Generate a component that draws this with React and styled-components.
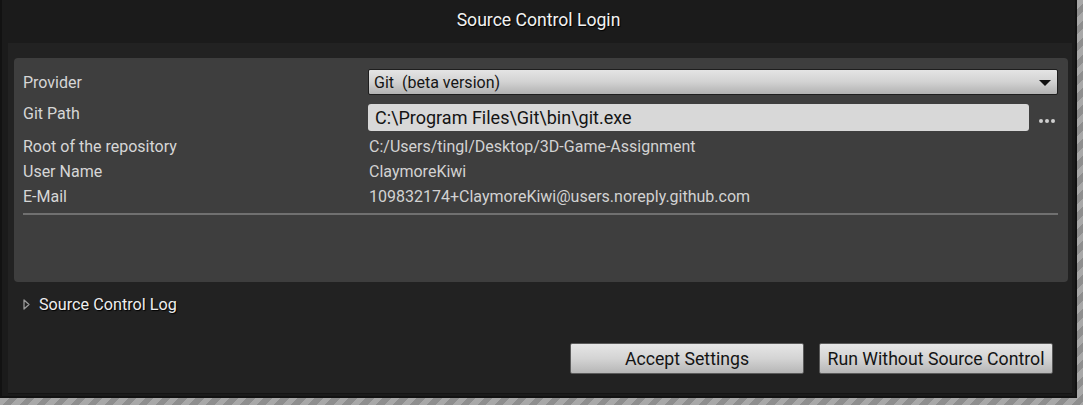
import React from "react";
import styled, { createGlobalStyle } from "styled-components";

const GlobalStyle = createGlobalStyle`
  html, body {
    margin: 0;
    padding: 0;
  }
  body {
    width: 1083px;
    height: 405px;
    overflow: hidden;
    font-family: Roboto, "Liberation Sans", sans-serif;
    background-color: #9a9a9a;
    background-image:
      repeating-linear-gradient(135deg, #8e8e8e 0 6px, #a8a8a8 6px 12px);
  }
`;

const Window = styled.div`
  box-sizing: border-box;
  width: 1077px;
  height: 398px;
  background: #1b1b1b;
  border: 2px solid #121212;
  border-top: none;
  display: flex;
  flex-direction: column;
`;

const TitleBar = styled.div`
  height: 43px;
  display: flex;
  align-items: center;
  justify-content: center;
  padding-bottom: 4px;
  box-sizing: border-box;
  color: #f2f2f2;
  font-size: 17.6px;
  text-shadow: 1px 1px 1px #000;
`;

const Content = styled.div`
  flex: 1;
  margin: 0 3px 2px 6px;
  background: #222222;
  padding: 15px 4px 0 6px;
  display: flex;
  flex-direction: column;
  border-bottom: 1px solid #141414;
`;

const Panel = styled.div`
  background: #3e3e3e;
  border-radius: 4px;
  height: 224px;
  box-sizing: border-box;
  padding: 11px 10px 0 9px;
  display: flex;
  flex-direction: column;
`;

const Row = styled.div`
  display: grid;
  grid-template-columns: 345px 1fr;
  align-items: ${(p) => (p.$top ? "start" : "center")};
  height: ${(p) => p.$h}px;
  margin-top: ${(p) => p.$mt || 0}px;
`;

const Label = styled.div`
  color: #d6d6d6;
  font-size: 16px;
  line-height: 19px;
  margin-top: ${(p) => p.$offset || 0}px;
`;

const Value = styled.div`
  color: #d2d2d2;
  font-size: 16px;
  line-height: 19px;
  padding-left: 1px;
`;

const Combo = styled.div`
  box-sizing: border-box;
  height: 26px;
  border: 1px solid #1e1e1e;
  border-radius: 2px;
  background: linear-gradient(#e4e4e4 0%, #d2d2d2 50%, #b2b2b2 100%);
  display: flex;
  align-items: center;
  justify-content: space-between;
  padding: 0 6px 0 5px;
  color: #151515;
  font-size: 16px;
  white-space: pre;
`;

const Arrow = styled.span`
  width: 0;
  height: 0;
  border-left: 6px solid transparent;
  border-right: 6px solid transparent;
  border-top: 6px solid #111;
  margin-top: 1px;
`;

const PathField = styled.div`
  display: flex;
  align-items: center;
  gap: 10px;
  padding-right: 3px;
`;

const TextInput = styled.div`
  flex: 1;
  box-sizing: border-box;
  height: 27px;
  background: #d8d8d8;
  border-radius: 3px;
  display: flex;
  align-items: center;
  padding-left: 7px;
  color: #141414;
  font-size: 18px;
`;

const Dots = styled.div`
  display: flex;
  gap: 2px;
  width: 16px;
  margin-top: 7px;
  span {
    width: 4px;
    height: 4px;
    border-radius: 50%;
    background: #cfcfcf;
  }
`;

const Separator = styled.div`
  height: 2px;
  background: #707070;
  margin-top: 4px;
`;

const LogToggle = styled.div`
  display: flex;
  align-items: center;
  gap: 9px;
  margin: 13px 0 0 9px;
  height: 18px;
  color: #eeeeee;
  font-size: 16.2px;
  text-shadow: 1px 1px 1px #000;
`;

const Footer = styled.div`
  display: flex;
  justify-content: flex-end;
  gap: 15px;
  margin-top: 30px;
  padding-right: 15px;
`;

const Button = styled.button`
  box-sizing: border-box;
  width: 234px;
  height: 31px;
  border: 1px solid #5a5a5a;
  border-radius: 2px;
  background: linear-gradient(#e6e6e6 0%, #d4d4d4 50%, #b6b6b6 100%);
  color: #141414;
  font-family: Roboto, "Liberation Sans", sans-serif;
  font-size: 17.7px;
  padding: 0;
  cursor: pointer;
`;

export default function App() {
  return (
    <>
      <GlobalStyle />
      <Window>
        <TitleBar>Source Control Login</TitleBar>
        <Content>
          <Panel>
            <Row $h={26}>
              <Label>Provider</Label>
              <Combo>
                <span>Git  (beta version)</span>
                <Arrow />
              </Combo>
            </Row>
            <Row $h={27} $mt={9} $top>
              <Label $offset={0}>Git Path</Label>
              <PathField>
                <TextInput>C:\Program Files\Git\bin\git.exe</TextInput>
                <Dots>
                  <span />
                  <span />
                  <span />
                </Dots>
              </PathField>
            </Row>
            <Row $h={24} $mt={3}>
              <Label>Root of the repository</Label>
              <Value>C:/Users/tingl/Desktop/3D-Game-Assignment</Value>
            </Row>
            <Row $h={25} $mt={1}>
              <Label>User Name</Label>
              <Value>ClaymoreKiwi</Value>
            </Row>
            <Row $h={25}>
              <Label>E-Mail</Label>
              <Value>109832174+ClaymoreKiwi@users.noreply.github.com</Value>
            </Row>
            <Separator />
          </Panel>
          <LogToggle>
            <svg width="7" height="11" viewBox="0 0 7 11">
              <path d="M1 1 L6 5.5 L1 10 Z" fill="none" stroke="#9a9a9a" strokeWidth="1.3" strokeLinejoin="round" />
            </svg>
            Source Control Log
          </LogToggle>
          <Footer>
            <Button>Accept Settings</Button>
            <Button>Run Without Source Control</Button>
          </Footer>
        </Content>
      </Window>
    </>
  );
}
